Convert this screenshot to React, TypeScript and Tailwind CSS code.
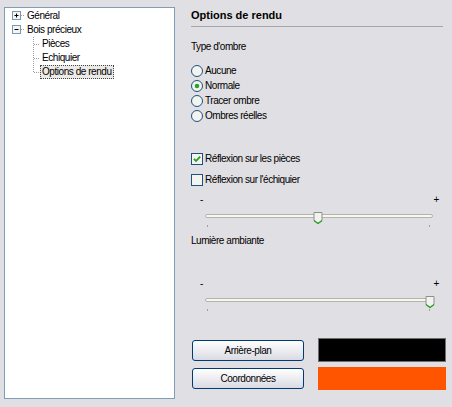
import React from 'react';

const font = { fontFamily: '"Liberation Sans", Arial, sans-serif' };

const Expander = ({ open }: { open: boolean }) => (
  <svg width="13" height="14" viewBox="0 0 13 14" className="shrink-0">
    <rect x="0.5" y="2.5" width="8" height="8" fill="#f4f4f0" stroke="#7898b5" />
    <line x1="2.5" y1="6.5" x2="6.5" y2="6.5" stroke="#000" />
    {!open && <line x1="4.5" y1="4.5" x2="4.5" y2="8.5" stroke="#000" />}
    <line x1="9" y1="6.5" x2="13" y2="6.5" stroke="#a0a0a0" strokeDasharray="1 1" />
  </svg>
);

const Connector = ({ last }: { last?: boolean }) => (
  <svg width="7" height="14" viewBox="0 0 7 14" className="shrink-0">
    <line x1="0.5" y1="0" x2="0.5" y2={last ? 7 : 14} stroke="#a0a0a0" strokeDasharray="1 1" />
    <line x1="1" y1="7.5" x2="7" y2="7.5" stroke="#a0a0a0" strokeDasharray="1 1" />
  </svg>
);

const Label = ({ text, selected }: { text: string; selected?: boolean }) => (
  <span
    className={`h-[14px] px-[1px] leading-[12px] border whitespace-nowrap ${
      selected ? 'border-dotted border-[#444] bg-[#ebeae6]' : 'border-transparent'
    }`}
  >
    {text}
  </span>
);

const Radio = ({ label, checked }: { label: string; checked?: boolean }) => (
  <div className="flex items-center h-[15px] gap-[2px]">
    <svg width="12" height="12" viewBox="0 0 12 12" className="shrink-0">
      <circle cx="6" cy="6" r="5.5" fill="#f3f3ef" stroke="#1c5180" />
      {checked && <circle cx="6" cy="6" r="2.3" fill="#2aa52a" />}
    </svg>
    <span>{label}</span>
  </div>
);

const Check = ({ label, checked }: { label: string; checked?: boolean }) => (
  <div className="flex items-center h-[15px] gap-[2px]">
    <svg width="12" height="12" viewBox="0 0 12 12" className="shrink-0">
      <rect x="0.5" y="0.5" width="11" height="11" fill="#f3f3ef" stroke="#1c5180" />
      {checked && <path d="M3 5.8 L5 8 L9.2 3.6" fill="none" stroke="#21a121" strokeWidth="1.8" />}
    </svg>
    <span>{label}</span>
  </div>
);

const Slider = ({ pos }: { pos: number }) => (
  <div>
    <div className="flex justify-between h-[13px] leading-[13px] pl-[9px] pr-[7px]">
      <span>-</span>
      <span>+</span>
    </div>
    <svg width="255" height="20" viewBox="0 0 255 20" className="block mt-[2px]">
      <rect x="14.5" y="6.5" width="227" height="3" rx="1.5" fill="#f7f7f2" stroke="#b4b4aa" />
      <line x1="16.5" y1="17" x2="16.5" y2="19" stroke="#a0a0a0" />
      <line x1="238.5" y1="17" x2="238.5" y2="19" stroke="#a0a0a0" />
      <path
        d={`M${pos - 4} 4.5 H${pos + 4} V12.5 L${pos} 15.5 L${pos - 4} 12.5 Z`}
        fill="#f2f2ee"
        stroke="#8f8f8a"
      />
      <path d={`M${pos - 4} 12.5 L${pos} 15.5 L${pos + 4} 12.5`} fill="none" stroke="#21a121" strokeWidth="1.2" />
    </svg>
  </div>
);

const XpButton = ({ label }: { label: string }) => (
  <button className="w-[112px] h-[21px] ml-[1px] rounded-[3px] border border-[#003c74] bg-gradient-to-b from-white to-[#dadae4] text-black leading-[19px] text-center">
    {label}
  </button>
);

export default function App() {
  return (
    <div
      className="w-[452px] h-[407px] bg-[#e0dfe3] flex text-[10px] tracking-[-0.45px] text-black overflow-hidden"
      style={font}
    >
      <div className="ml-[4px] mt-[7px] w-[171px] h-[392px] border border-[#7f9db9] bg-white pt-[1px]">
        <div className="flex items-center h-[14px] pl-[7px]">
          <Expander open={false} />
          <Label text="Général" />
        </div>
        <div className="flex items-center h-[14px] pl-[7px]">
          <Expander open />
          <Label text="Bois précieux" />
        </div>
        <div className="flex items-center h-[14px] pl-[28px]">
          <Connector />
          <Label text="Pièces" />
        </div>
        <div className="flex items-center h-[14px] pl-[28px]">
          <Connector />
          <Label text="Echiquier" />
        </div>
        <div className="flex items-center h-[14px] pl-[28px]">
          <Connector last />
          <Label text="Options de rendu" selected />
        </div>
      </div>

      <div className="ml-[16px] w-[255px] flex flex-col">
        <div className="mt-[8px] h-[19px] w-[252px] border-b border-[#a7a6aa] font-bold text-[11px] tracking-normal leading-[14px]">
          Options de rendu
        </div>

        <div className="mt-[13px] h-[13px] leading-[13px]">Type d'ombre</div>

        <div className="mt-[10px] flex flex-col">
          <Radio label="Aucune" />
          <Radio label="Normale" checked />
          <Radio label="Tracer ombre" />
          <Radio label="Ombres réelles" />
        </div>

        <div className="mt-[28px]">
          <Check label="Réflexion sur les pièces" checked />
        </div>
        <div className="mt-[6px]">
          <Check label="Réflexion sur l'échiquier" />
        </div>

        <div className="mt-[6px]">
          <Slider pos={127} />
        </div>

        <div className="mt-[6px] h-[13px] leading-[13px]">Lumière ambiante</div>

        <div className="mt-[30px]">
          <Slider pos={239} />
        </div>

        <div className="mt-[26px] flex items-center h-[24px]">
          <XpButton label="Arrière-plan" />
          <div className="ml-[14px] w-[128px] h-[24px] bg-black border border-[#6d6d6d]" />
        </div>
        <div className="mt-[5px] flex items-center h-[23px]">
          <XpButton label="Coordonnées" />
          <div className="ml-[14px] w-[128px] h-[23px] bg-[#ff5500]" />
        </div>
      </div>
    </div>
  );
}
